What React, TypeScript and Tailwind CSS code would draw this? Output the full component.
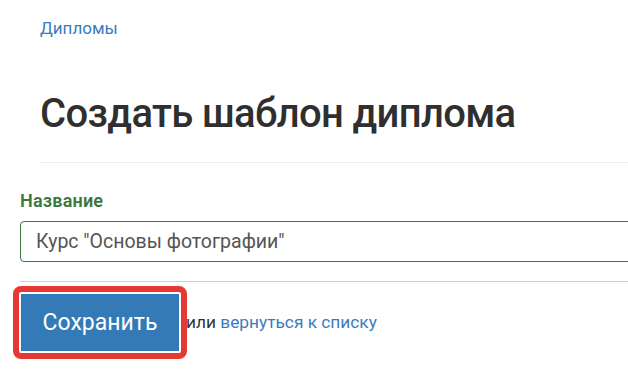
export default function App() {
  return (
    <div className="w-[628px] h-[384px] overflow-hidden bg-white font-['Roboto',sans-serif]">
      <div className="pl-[40px] pt-[17px]">
        <a href="#" className="text-[17px] leading-[22px] text-[#3a7bc0]">
          Дипломы
        </a>
        <h1 className="mt-[49px] text-[40px] leading-[48px] font-medium text-[#2f2f2f] tracking-[-0.65px]">
          Создать шаблон диплома
        </h1>
        <div className="mt-[24px] h-px bg-[#ececec]" />
      </div>

      <form className="pl-[20px] pt-[27px]" onSubmit={(e) => e.preventDefault()}>
        <label className="block text-[18px] leading-[22px] font-semibold text-[#3c763d] tracking-[0.2px]">
          Название
        </label>
        <input
          className="mt-[9px] block w-[640px] h-[41px] rounded-[4px] border border-[#3c763d] px-[15px] text-[19.5px] text-[#555] outline-none"
          defaultValue={'Курс "Основы фотографии"'}
        />
        <div className="mt-[19px] h-px bg-[#cfcfcf]" />

        <div className="mt-[4px] flex items-center">
          <div className="-ml-[7px] rounded-[8px] border-[6px] border-[#e53935] p-[2px]">
            <button
              type="submit"
              className="block w-[158px] h-[57px] bg-[#337ab7] text-white text-[23px] leading-none"
            >
              Сохранить
            </button>
          </div>
          <span className="-ml-[1px] text-[17.3px] text-[#333]">
            или{" "}
            <a href="#" className="text-[#3a7bc0]">
              вернуться к списку
            </a>
          </span>
        </div>
      </form>
    </div>
  )
}
